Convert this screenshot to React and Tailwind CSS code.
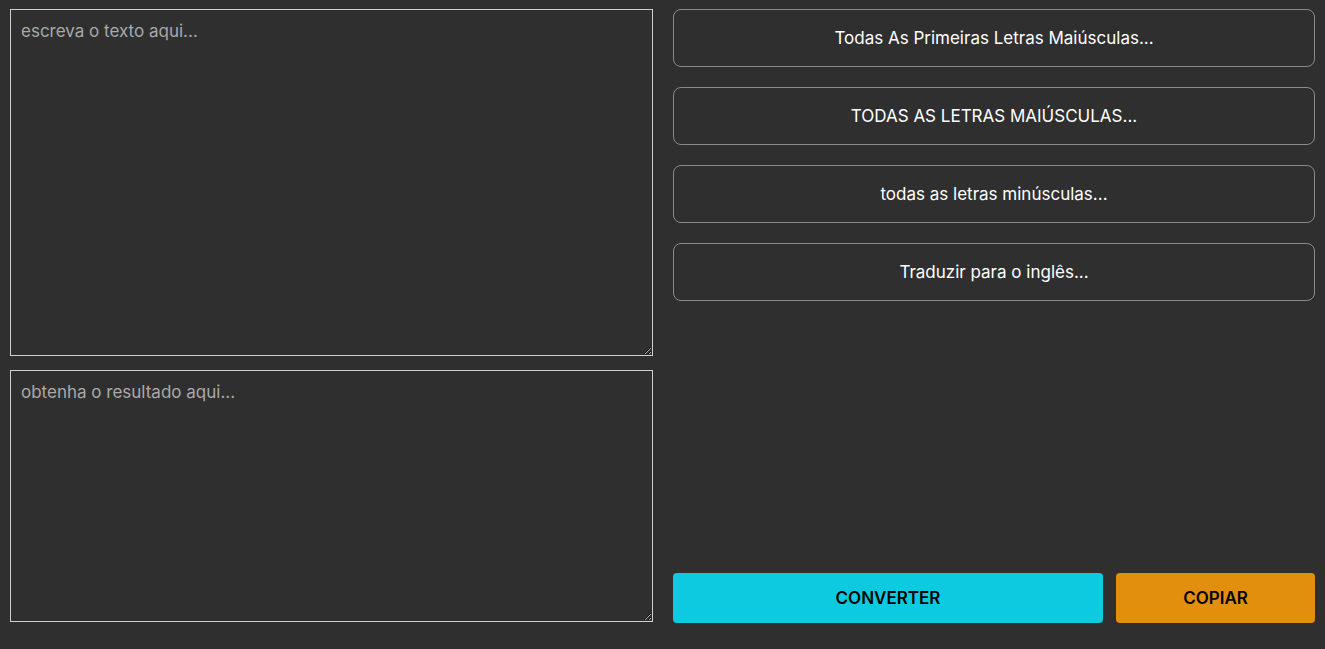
import { useState } from "react";

const options = [
  "Todas As Primeiras Letras Maiúsculas...",
  "TODAS AS LETRAS MAIÚSCULAS...",
  "todas as letras minúsculas...",
  "Traduzir para o inglês...",
];

const App = () => {
  const [text, setText] = useState("");
  const [result, setResult] = useState("");

  return (
    <div
      className="flex h-screen gap-5 bg-[#2f2f2f] px-[10px] pt-[9px] text-white"
      style={{ fontFamily: "Inter, 'Noto Sans', sans-serif" }}
    >
      {/* Text areas */}
      <div className="flex w-[643px] flex-col gap-[14px]">
        <textarea
          value={text}
          onChange={(e) => setText(e.target.value)}
          placeholder="escreva o texto aqui..."
          className="block h-[347px] w-full border border-[#d0d0d0] bg-[#2f2f2f] px-[10px] pt-[9px] text-[17px] leading-[24px] text-white outline-none placeholder:text-[#a9a9a9]"
        />
        <textarea
          value={result}
          onChange={(e) => setResult(e.target.value)}
          placeholder="obtenha o resultado aqui..."
          className="block h-[252px] w-full border border-[#d0d0d0] bg-[#2f2f2f] px-[10px] pt-[9px] text-[17px] leading-[24px] text-white outline-none placeholder:text-[#a9a9a9]"
        />
      </div>

      {/* Options */}
      <div className="flex w-[642px] flex-col pb-[26px]">
        <div className="flex flex-col gap-5">
          {options.map((opt) => (
            <button
              key={opt}
              className="h-[58px] w-full rounded-lg border border-[#8a8a8a] bg-transparent pt-[2px] text-[17px] text-white"
            >
              {opt}
            </button>
          ))}
        </div>
        <div className="mt-auto flex gap-[13px]">
          <button className="h-[50px] w-[430px] rounded bg-[#0ecae1] pt-[2px] text-[17px] font-semibold text-black">
            CONVERTER
          </button>
          <button className="h-[50px] flex-1 rounded bg-[#e38f0e] pt-[2px] text-[17px] font-semibold text-black">
            COPIAR
          </button>
        </div>
      </div>
    </div>
  );
};

export default App;
